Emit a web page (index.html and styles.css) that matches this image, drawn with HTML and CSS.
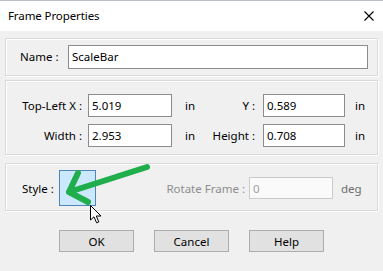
FILE: index.html
```html
<!DOCTYPE html>
<html lang="en">
<head>
    <meta charset="UTF-8">
    <meta name="viewport" content="width=device-width, initial-scale=1.0">
    <title>Frame Properties</title>
    <link rel="stylesheet" href="styles.css">
</head>
<body>
    <div class="dialog">
        <div class="titlebar">
            <span class="title">Frame Properties</span>
            <svg class="close" width="10" height="10" viewBox="0 0 10 10">
                <path d="M0.5 0.5 L9.5 9.5 M9.5 0.5 L0.5 9.5" stroke="#000" stroke-width="1.1" fill="none"/>
            </svg>
        </div>

        <div class="content">
            <div class="group group-name">
                <label class="name-label">Name :</label>
                <input class="field name-field" type="text" value="ScaleBar">
            </div>

            <div class="group group-pos">
                <label class="lbl">Top-Left X :</label>
                <input class="field" type="text" value="5.019">
                <span class="unit">in</span>
                <label class="lbl lbl2">Y :</label>
                <input class="field" type="text" value="0.589">
                <span class="unit unit2">in</span>

                <label class="lbl">Width :</label>
                <input class="field" type="text" value="2.953">
                <span class="unit">in</span>
                <label class="lbl lbl2">Height :</label>
                <input class="field" type="text" value="0.708">
                <span class="unit unit2">in</span>
            </div>

            <div class="group group-style">
                <label class="style-label">Style :</label>
                <div class="style-box"></div>
                <label class="rotate-label">Rotate Frame :</label>
                <input class="field rotate-field" type="text" value="0" disabled>
                <span class="deg">deg</span>
            </div>

            <div class="buttons">
                <button class="btn">OK</button>
                <button class="btn">Cancel</button>
                <button class="btn">Help</button>
            </div>
        </div>

        <!-- annotation arrow + mouse pointer drawn over the dialog -->
        <svg class="annot" width="383" height="271" viewBox="0 0 383 271">
            <path d="M147 167 L69 192 M78 173 L69 192 L88 202" stroke="#1fae4b" stroke-width="6" fill="none" stroke-linecap="round" stroke-linejoin="round"/>
        </svg>
        <svg class="pointer" width="14" height="20" viewBox="0 0 14 20">
            <path d="M0.5 0.5 L0.5 15 L4 11.8 L6.6 17.8 L8.8 16.9 L6.3 11 L11 11 Z" fill="#fff" stroke="#000" stroke-width="1" stroke-linejoin="round"/>
        </svg>
    </div>
</body>
</html>
```

FILE: styles.css
```css
* {
    box-sizing: border-box;
    margin: 0;
    padding: 0;
}

body {
    font-family: "Noto Sans", Arial, sans-serif;
    font-size: 11.5px;
    color: #000;
    background-color: #f0f0f0;
}

.dialog {
    position: relative;
    width: 383px;
    height: 271px;
    background-color: #f0f0f0;
    border-top: 1px solid #b9bccb;
    overflow: hidden;
}

.titlebar {
    display: flex;
    align-items: center;
    justify-content: space-between;
    height: 30px;
    padding: 0 9px 1px 8px;
    background-color: #fff;
}

.title {
    font-size: 11.5px;
    letter-spacing: -0.1px;
}

.content {
    padding: 7px 5px 0 5px;
}

.group {
    border: 1px solid #dadada;
    box-shadow: inset 1px 1px 0 #fff, 1px 1px 0 #fff;
}

.field {
    font-family: "Noto Sans", Arial, sans-serif;
    font-size: 11.5px;
    color: #000;
    height: 23px;
    padding: 0 3px;
    border: 1px solid #8c8c8c;
    background-color: #fff;
    outline: none;
}

/* name */
.group-name {
    display: flex;
    align-items: center;
    height: 38px;
    padding: 0 9px 1px 14px;
}

.name-label {
    width: 48px;
}

.name-field {
    flex: 1;
    height: 24px;
}

/* position / size */
.group-pos {
    display: grid;
    grid-template-columns: 82px 84px 30px 61px 82px 1fr;
    row-gap: 7px;
    align-items: center;
    margin-top: 4px;
    padding: 13px 0 7px 0;
}

.lbl {
    text-align: right;
    padding-right: 6px;
}

.lbl2 {
    padding-right: 8px;
}

.unit {
    padding-left: 13px;
}

.unit2 {
    padding-left: 10px;
}

.group-pos .field {
    width: 100%;
}

/* style */
.group-style {
    display: flex;
    align-items: center;
    margin-top: 8px;
    padding: 6px 0 4px 16px;
}

.style-label {
    width: 37px;
}

.style-box {
    width: 37px;
    height: 36px;
    background-color: #cce8ff;
    border: 1px solid #4f86b8;
}

.rotate-label {
    width: 153px;
    text-align: right;
    padding-right: 4px;
    color: #8d8d8d;
}

.rotate-field {
    width: 84px;
    height: 22px;
    border-color: #cccccc;
    background-color: #fafafa;
    color: #a0a0a0;
}

.deg {
    padding-left: 8px;
    color: #6d6d6d;
}

/* buttons */
.buttons {
    display: flex;
    justify-content: center;
    gap: 20px;
    margin-top: 19px;
}

.btn {
    width: 75px;
    height: 22px;
    font-family: "Noto Sans", Arial, sans-serif;
    font-size: 11.5px;
    color: #000;
    background-color: #e1e1e1;
    border: 1px solid #adadad;
}

.annot {
    position: absolute;
    left: 0;
    top: -1px;
    pointer-events: none;
}

.pointer {
    position: absolute;
    left: 90px;
    top: 204px;
}
```
